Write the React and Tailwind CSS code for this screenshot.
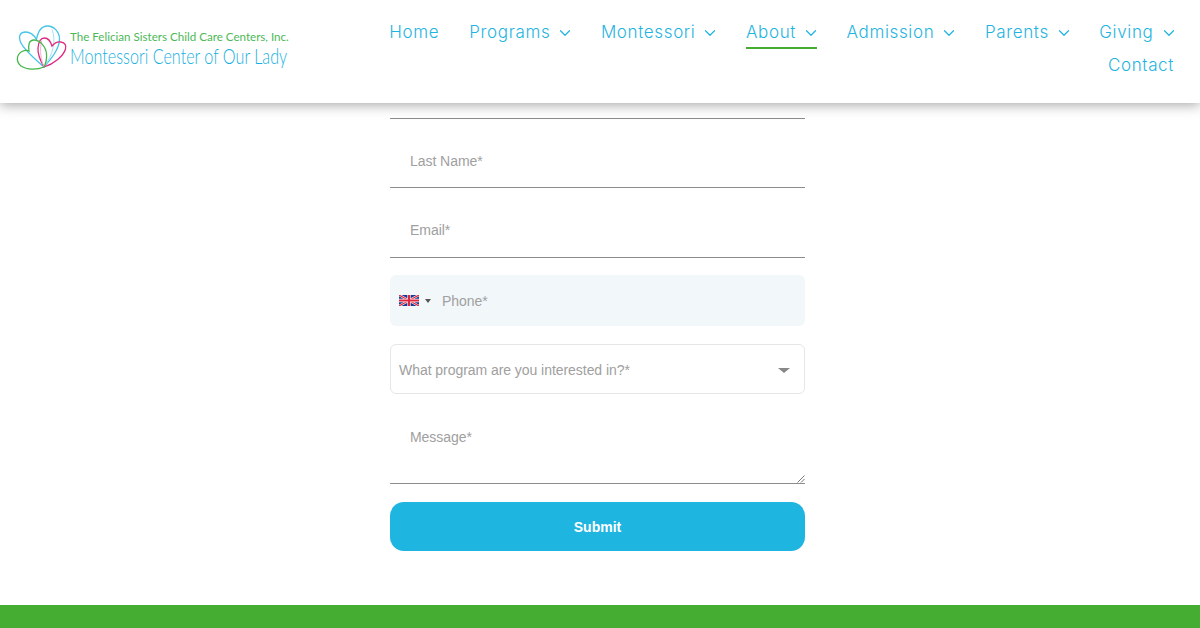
import { ChevronDown } from "lucide-react";

const navItems = [
  { label: "Home" },
  { label: "Programs", menu: true },
  { label: "Montessori", menu: true },
  { label: "About", menu: true, active: true },
  { label: "Admission", menu: true },
  { label: "Parents", menu: true },
  { label: "Giving", menu: true },
  { label: "Contact" },
];

function LogoMark() {
  return (
    <svg width="54" height="50" viewBox="15 22 54 50" fill="none" strokeWidth="1.3">
      <path d="M44 67C36 60 24 50 20.500 42C18 35 21 32 25.500 32C30 32 34 35 36.500 39.500C38 31 42 26 47.500 26C54 26 59.500 32 59.500 39C59.500 49 51 59 44 67Z" stroke="#45c4e8" />
      <path d="M52 29.500C56.500 40 53 55 44 67" stroke="#a6e1f3" strokeWidth="1" />
      <path d="M44 67C40 60 37.500 54 38 48C38.500 42 41 38 44.500 38C48 38 50.500 41 52 46C54.500 43 58 41.500 61 42C65 42.500 66.500 45.500 65.500 49C63.500 56 54 64 44 67Z" stroke="#e0287f" />
      <path d="M41.500 41C39.500 51 41 60 44 67" stroke="#f3b3d3" strokeWidth="1" />
      <path d="M44 67C37 70 27 70 21 66C16 62 16 55 22 51.500C25 50 27 50 29 51C28 45 29 40 34 40C40 40 46 47 46.500 54C47 59 46 63 44 67Z" stroke="#45b649" />
    </svg>
  );
}

function UkFlag() {
  return (
    <svg width="20" height="11" viewBox="0 0 60 33" className="shrink-0">
      <rect width="60" height="33" fill="#1a3a8f" />
      <path d="M0 0L60 33M60 0L0 33" stroke="#fff" strokeWidth="7" />
      <path d="M0 0L60 33M60 0L0 33" stroke="#e0253f" strokeWidth="3.500" />
      <path d="M30 0V33M0 16.500H60" stroke="#fff" strokeWidth="10" />
      <path d="M30 0V33M0 16.500H60" stroke="#e0253f" strokeWidth="6.500" />
    </svg>
  );
}

function LineField({ label, className, children }) {
  return (
    <div className={`border-b border-[#8c8c8c] pl-5 text-[14px] leading-[20px] tracking-[-0.05px] text-[#a0a0a0] ${className}`}>
      {label}
      {children}
    </div>
  );
}

export default function App() {
  return (
    <div className="flex h-[628px] flex-col overflow-hidden bg-white font-['Liberation_Sans',Arial,sans-serif]">
      <header className="relative z-10 flex h-[103px] shrink-0 bg-white pl-[17px] pr-[26px] shadow-[0_2px_12px_rgba(0,0,0,0.35)]">
        <div className="flex items-start pt-[22px]">
          <div className="-ml-[2px]">
            <LogoMark />
          </div>
          <div className="ml-[1px] pt-[7px]">
            <div className="font-['Lato',sans-serif] text-[11.600px] leading-[16px] whitespace-nowrap text-[#4cb857]">
              The Felician Sisters Child Care Centers, Inc.
            </div>
            <div className="origin-left -translate-y-px scale-x-[0.77] font-['Lato',sans-serif] text-[21px] leading-[24px] font-light whitespace-nowrap text-[#18b0e0]">
              Montessori Center of Our Lady
            </div>
          </div>
        </div>
        <nav className="ml-auto flex w-[800px] flex-wrap content-start justify-end gap-x-[30px] pt-4 font-['Inter',sans-serif] text-[17px] leading-[33px] font-[350] tracking-[0.65px] text-[#1fb4e0]">
          {navItems.map((item) => (
            <a
              key={item.label}
              className={`flex h-[33px] items-center ${item.active ? "relative" : ""}`}
            >
              {item.label}
              {item.menu && <ChevronDown className="-mr-[3.500px] ml-[6px] size-[18px]" strokeWidth={1.6} />}
              {item.active && <span className="absolute top-[31px] right-0 left-0 h-[2px] bg-[#45ad32]" />}
            </a>
          ))}
        </nav>
      </header>

      <main className="flex flex-1 flex-col items-center pt-[15px]">
        <form className="mr-[5px] w-[415px]">
          <div className="border-b border-[#8c8c8c]" />
          <LineField label="Last Name*" className="h-[69px] pt-8" />
          <LineField label="Email*" className="h-[70px] pt-8" />

          <div className="mt-[17px] flex h-[51px] items-center rounded-[6px] bg-[#f2f7fa] pl-[9px] text-[14px] tracking-[-0.05px] text-[#a0a0a0]">
            <UkFlag />
            <span className="ml-[6px] h-0 w-0 border-x-[3px] border-t-[4px] border-x-transparent border-t-[#555]" />
            <span className="ml-[11px] pt-[1px]">Phone*</span>
          </div>

          <div className="mt-[18px] flex h-[50px] items-center justify-between rounded-[6px] border border-[#e6e6e6] pt-[2px] pr-[14px] pl-[8px] text-[14px] tracking-[-0.05px] text-[#a0a0a0]">
            <span>What program are you interested in?*</span>
            <span className="h-0 w-0 border-x-[6px] border-t-[5px] border-x-transparent border-t-[#888]" />
          </div>

          <LineField label="Message*" className="relative h-[90px] pt-[33px]">
            <svg width="8" height="8" viewBox="0 0 8 8" className="absolute right-0 bottom-0" stroke="#555" strokeWidth="0.8">
              <path d="M0.500 7.500L7.500 0.500M4 7.500L7.500 4" />
            </svg>
          </LineField>

          <button
            type="button"
            className="mt-[18px] h-[49px] w-full rounded-[14px] bg-[#1eb5e0] pt-[1px] text-[14px] font-bold text-white"
          >
            Submit
          </button>
        </form>
      </main>

      <footer className="h-[23px] shrink-0 bg-[#45ad32]" />
    </div>
  );
}
